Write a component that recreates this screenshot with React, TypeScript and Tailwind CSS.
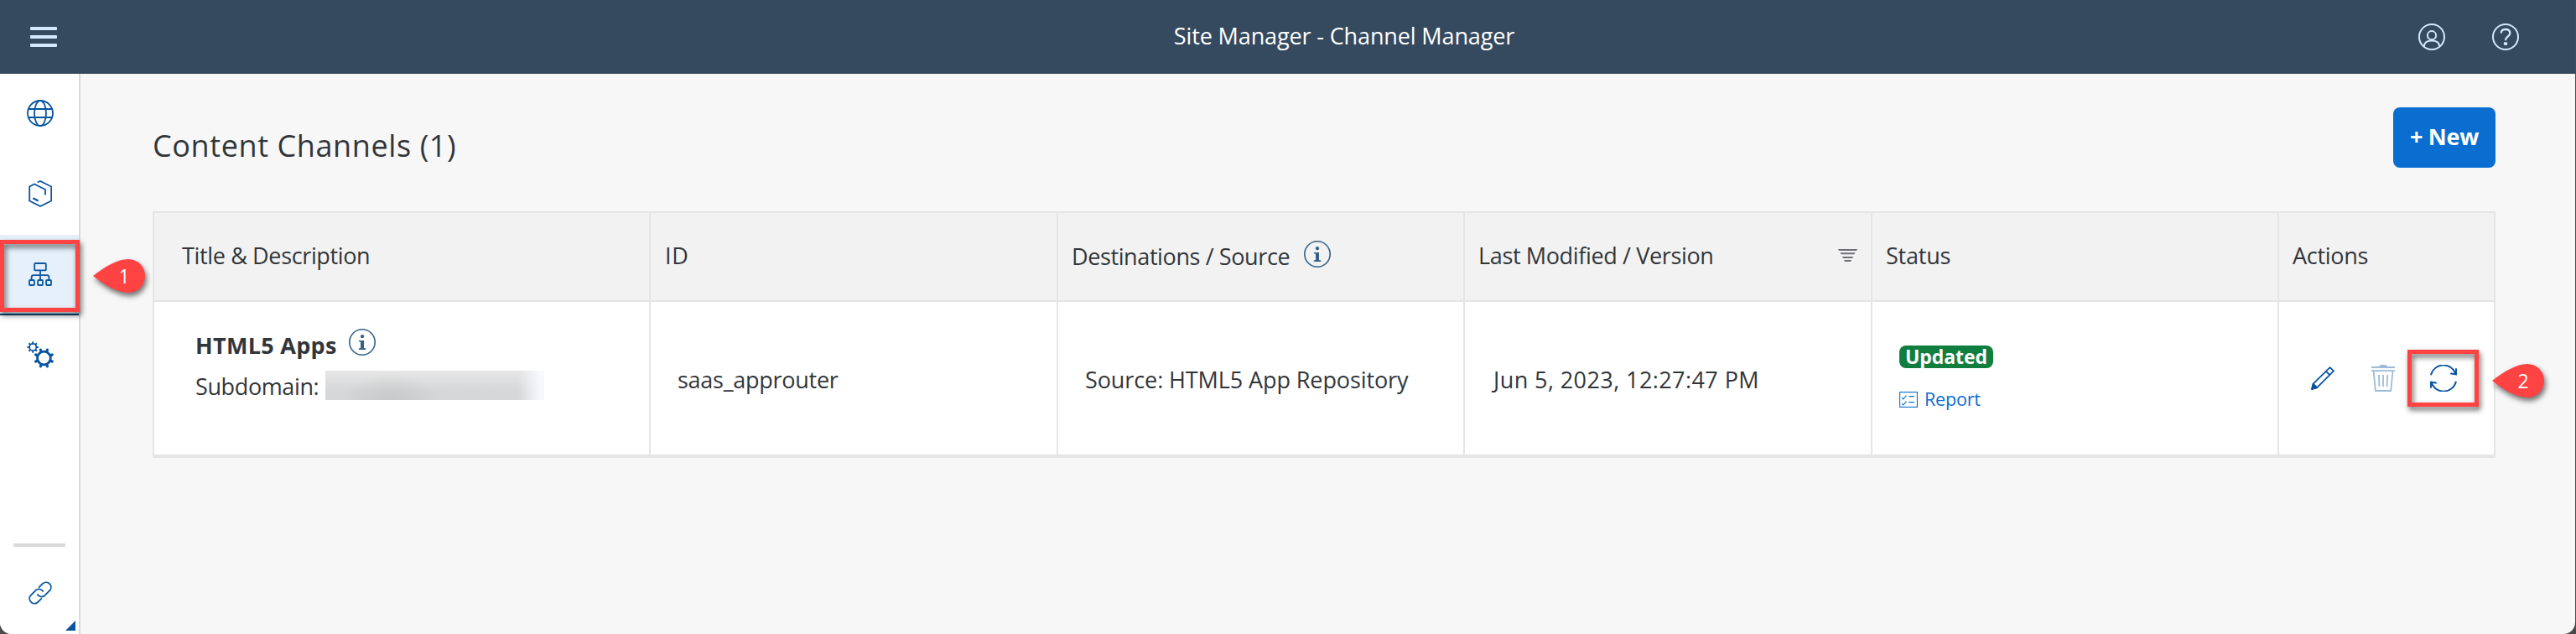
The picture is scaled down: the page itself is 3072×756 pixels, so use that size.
import type { ReactNode } from "react";

function Hamburger() {
  return (
    <div className="flex w-8 flex-col gap-1.5">
      <span className="h-1 rounded-[1px] bg-[#d1e8ff]" />
      <span className="h-1 rounded-[1px] bg-[#d1e8ff]" />
      <span className="h-1 rounded-[1px] bg-[#d1e8ff]" />
    </div>
  );
}

function UserIcon() {
  return (
    <svg width="32" height="32" viewBox="0 0 32 32" fill="none" stroke="#d1e8ff" strokeWidth="2">
      <circle cx="16" cy="16" r="15" />
      <circle cx="16" cy="14.2" r="5.1" />
      <path d="M6.8 27.5C7 22.6 10.5 20.6 16 20.6s9 2 9.2 6.9" />
    </svg>
  );
}

function HelpIcon() {
  return (
    <svg width="32" height="32" viewBox="0 0 32 32" fill="none" stroke="#d1e8ff" strokeWidth="2">
      <circle cx="16" cy="16" r="15" />
      <path d="M10.7 11.6C10.7 8.4 12.8 7 16 7s5.3 1.6 5.3 4.6c0 4.2-5.4 3.6-5.4 8.6" strokeWidth="2.3" />
      <rect x="13.8" y="22.2" width="4.4" height="3.8" rx="1.4" fill="#d1e8ff" stroke="none" />
    </svg>
  );
}

function GlobeIcon() {
  return (
    <svg width="32" height="32" viewBox="0 0 32 32" fill="none" stroke="#0854a0" strokeWidth="1.8">
      <circle cx="16" cy="16" r="15" />
      <ellipse cx="16" cy="16" rx="7" ry="15" />
      <path d="M2 11h28M2 21h28" />
    </svg>
  );
}

function ProductIcon() {
  return (
    <svg width="28" height="32" viewBox="0 0 28 32" fill="none" stroke="#0854a0" strokeWidth="1.8">
      <path d="M10.8 2.5 14 1l13.2 6.5v17L14 31 1.2 24.5v-17L7 4.5 20 11v6.5" />
      <path d="m5.3 21.2 6.4 3.3" strokeWidth="2.2" />
    </svg>
  );
}

function HierarchyIcon() {
  return (
    <svg width="28" height="28" viewBox="0 0 28 28" fill="none" stroke="#0854a0" strokeWidth="1.8">
      <rect x="7.2" y="1" width="13.6" height="8.4" rx="1" />
      <path d="M14 9.4V21M3.6 20.6V17.6Q3.6 15.1 6.1 15.1H21.9Q24.4 15.1 24.4 17.6V20.6" />
      <rect x="1" y="21" width="5.9" height="6" rx="1" />
      <rect x="11.1" y="21" width="5.9" height="6" rx="1" />
      <rect x="21.1" y="21" width="5.9" height="6" rx="1" />
    </svg>
  );
}

const TEETH = [0, 45, 90, 135, 180, 225, 270, 315];

function GearsIcon() {
  return (
    <svg width="32" height="32" viewBox="0 0 32 32" fill="none" stroke="#0854a0">
      <circle cx="7.2" cy="7" r="4.1" strokeWidth="1.7" />
      {TEETH.map((a) => (
        <path key={a} d="M7.2 2.8V.3" strokeWidth="1.9" transform={`rotate(${a} 7.2 7)`} />
      ))}
      <circle cx="20.4" cy="20" r="7.9" strokeWidth="2.8" />
      {TEETH.map((a) => (
        <path key={a} d="M20.4 11.4V9.4" strokeWidth="3.2" strokeLinecap="round" transform={`rotate(${a + 22.5} 20.4 20)`} />
      ))}
    </svg>
  );
}

function LinkIcon() {
  return (
    <svg width="28" height="28" viewBox="0 0 28 28" fill="none" stroke="#0854a0" strokeWidth="1.8">
      <path d="M12.2 7.7l5-5a5.9 5.9 0 0 1 8.3 8.3l-6.2 6.2a5.9 5.9 0 0 1-8.9-1.7" />
      <path d="M15.8 20.3l-5 5a5.9 5.9 0 0 1-8.3-8.3l6.2-6.2a5.9 5.9 0 0 1 8.9 1.7" />
    </svg>
  );
}

function InfoIcon() {
  return (
    <svg width="32" height="32" viewBox="0 0 32 32" className="shrink-0">
      <circle cx="16" cy="16" r="15.2" fill="none" stroke="#346187" strokeWidth="1.6" />
      <circle cx="16" cy="9.1" r="2.2" fill="#346187" />
      <path d="M12 13.9h6v9.2l2.3.5v1.3h-8.5v-1.3l2.2-.5v-7.4l-2-.5z" fill="#346187" />
    </svg>
  );
}

function SortIcon() {
  return (
    <svg width="23" height="15" viewBox="0 0 23 15" fill="#6f7076">
      <path d="M0 0h23l-1 2H1zM2.6 4.2h17.8l-1 2H3.6zM5 9h13l-1 2H6zM7 13h9l-1 2H8z" />
    </svg>
  );
}

function ReportIcon() {
  return (
    <svg width="22" height="19" viewBox="0 0 22 19" fill="none" stroke="#0a6ed1" strokeWidth="1.1">
      <rect x=".6" y=".6" width="20.8" height="17.8" />
      <path d="M3 7.2 4.8 9l3.6-4.4M3 14.2 4.8 16l3.6-4.4M11.3 5.6h6.6M11.3 12.6h6.6" />
    </svg>
  );
}

function EditIcon() {
  return (
    <svg width="28" height="28" viewBox="0 0 28 28" fill="none" stroke="#0854a0" strokeWidth="1.8" strokeLinejoin="round">
      <path d="M1.1 27 2.6 20.6 22.6 1.1 27 5.4 7.2 25.2ZM17.9 5.8l4.4 4.4" />
      <path d="M1.1 27 2.6 20.6 7.2 25.2Z" fill="#0854a0" />
    </svg>
  );
}

function DeleteIcon() {
  return (
    <svg width="28" height="32" viewBox="0 0 28 32" fill="none" stroke="#9cbbd9" strokeWidth="1.8">
      <path d="M8.6 2 11 .1h6L19.4 2H28v2H0V2zM0 6.2h28v1.7H0z" fill="#9cbbd9" stroke="none" />
      <path d="M2.6 7.5 4.9 31h18.3L25.5 7.5" />
      <path d="m8.9 12 .6 14M14 12v14M19.200 12l-.6 14" />
    </svg>
  );
}

function SyncIcon() {
  return (
    <svg width="32" height="32" viewBox="0 0 32 32" fill="none" stroke="#0854a0" strokeWidth="1.9">
      <path d="M1 12.3A15.3 15.3 0 0 1 30.6 11.4M31 4.2v7.2l-6.8-1.1" />
      <path d="M31 19.7A15.3 15.3 0 0 1 1.4 20.6M1 27.8v-7.2l6.8 1.1" />
    </svg>
  );
}

function Pin({ label, className }: { label: string; className: string }) {
  return (
    <div className={`absolute h-10 w-[62px] ${className}`}>
      <svg width="62" height="40" viewBox="0 0 62 40" className="absolute inset-0 overflow-visible drop-shadow-[2px_4px_3px_rgba(0,0,0,0.55)]">
        <path d="M0 20C14 9 29 0 42 0a20 20 0 0 1 0 40C29 40 14 31 0 20Z" fill="#ff4242" />
      </svg>
      <span className="absolute inset-y-0 left-[27px] flex w-5 items-center justify-center text-[23px] text-white">{label}</span>
    </div>
  );
}

function NavItem({ children, active }: { children: ReactNode; active?: boolean }) {
  return (
    <div className={`flex h-24 items-center justify-center border-b-2 pl-0.5 ${active ? "border-[#0a4478] bg-[#e5f0fa]" : "border-transparent"}`}>
      {children}
    </div>
  );
}

const headCell = "flex items-center border-b-2 border-[#e5e5e5] bg-[#f2f2f2] pb-[3px]";
const bodyCell = "flex bg-white";
const divider = "border-r-2 border-r-[#e5e5e5]";

export default function App() {
  return (
    <div className="h-[756px] w-full overflow-hidden bg-[#4c4a48] pr-px font-['Open_Sans','Noto_Sans',sans-serif] text-[27px] leading-10 text-[#32363a]">
      <div className="relative flex h-full flex-col overflow-hidden rounded-b-[14px] bg-[#f7f7f7] whitespace-nowrap">
        <header className="grid h-[88px] shrink-0 grid-cols-[1fr_auto_1fr] items-center bg-[#354a5f] pr-[67px] pl-9">
          <Hamburger />
          <h1 className="pb-[2px] pl-[166px] tracking-[-0.13px] text-white">Site Manager - Channel Manager</h1>
          <div className="flex justify-end gap-14">
            <UserIcon />
            <HelpIcon />
          </div>
        </header>

        <div className="flex min-h-0 flex-1">
          <nav className="flex w-24 shrink-0 flex-col border-r-2 border-[#d9d9d9] bg-white">
            <NavItem><GlobeIcon /></NavItem>
            <NavItem><ProductIcon /></NavItem>
            <NavItem active><HierarchyIcon /></NavItem>
            <NavItem><GearsIcon /></NavItem>
            <div className="mt-auto ml-4 h-1 w-[62px] bg-[#d9d9d9]" />
            <div className="flex h-[88px] items-end justify-center pb-[19px] pl-0.5">
              <LinkIcon />
            </div>
            <div className="flex h-4 items-start justify-end pr-1">
              <svg width="12" height="12" viewBox="0 0 12 12"><path d="M12 0v12H0z" fill="#0854a0" /></svg>
            </div>
          </nav>

          <main className="flex-1 pr-[95px] pl-[86px]">
            <div className="flex h-[164px] items-start justify-between pt-10">
              <h2 className="pt-[26px] text-[36px] leading-[40px] tracking-[0.6px]">Content Channels (1)</h2>
              <button className="flex h-[72px] w-[122px] items-center justify-center rounded-lg bg-[#0a6ed1] pb-[3px] font-bold tracking-[-0.3px] text-white">
                + New
              </button>
            </div>

            <div className="grid h-[294px] grid-cols-[592px_486px_485px_486px_485px_256px] grid-rows-[106px_182px] border-2 border-b-4 border-[#e5e5e5]">
              <div className={`${headCell} ${divider} pl-[33px] tracking-[-0.36px]`}>Title &amp; Description</div>
              <div className={`${headCell} ${divider} pl-[17px] tracking-[0.8px]`}>ID</div>
              <div className={`${headCell} ${divider} gap-[17px] pl-4 tracking-[-0.39px]`}>
                <span className="pt-[3px]">Destinations / Source</span>
                <div className="pb-[3px]"><InfoIcon /></div>
              </div>
              <div className={`${headCell} ${divider} justify-between pr-[16px] pl-4 tracking-[-0.36px]`}>
                Last Modified / Version
                <SortIcon />
              </div>
              <div className={`${headCell} ${divider} pl-4 tracking-[-0.23px]`}>Status</div>
              <div className={`${headCell} pl-4 tracking-[-0.3px]`}>Actions</div>

              <div className={`${bodyCell} ${divider} flex-col gap-[9px] pt-8 pl-[49px]`}>
                <div className="flex h-10 items-center gap-[14px]">
                  <span className="font-bold tracking-[0.3px]">HTML5 Apps</span>
                  <div className="pb-[8px]"><InfoIcon /></div>
                </div>
                <div className="flex h-10 items-center gap-[8px]">
                  <span className="tracking-[-0.38px]">Subdomain:</span>
                  <span className="mb-[3px] h-[35px] w-[261px] bg-[linear-gradient(to_right,transparent_88%,#f6f8fb_98%),radial-gradient(ellipse_60px_30px_at_30%_100%,rgba(190,190,190,0.6),transparent),linear-gradient(to_bottom,#e6e6e6,#d6d7d9_70%)]" />
                </div>
              </div>
              <div className={`${bodyCell} ${divider} items-center pt-[3px] pl-8 tracking-[-0.26px]`}>saas_approuter</div>
              <div className={`${bodyCell} ${divider} items-center pt-[3px] pl-8 tracking-[-0.1px]`}>Source: HTML5 App Repository</div>
              <div className={`${bodyCell} ${divider} items-center pt-[3px] pl-[34px] tracking-[0.42px]`}>Jun 5, 2023, 12:27:47 PM</div>
              <div className={`${bodyCell} ${divider} flex-col items-start pt-[52px] pl-8`}>
                <span className="flex h-[27px] w-28 items-center justify-center rounded-lg bg-[#107e3e] pb-px text-[23px] font-bold tracking-[-0.08px] text-white">
                  Updated
                </span>
                <span className="mt-[21px] flex h-8 items-center gap-2 text-[21.5px] leading-8 tracking-[-0.2px] text-[#0a6ed1]">
                  <ReportIcon />
                  Report
                </span>
              </div>
              <div className="flex items-center bg-white pl-[38px]">
                <EditIcon />
                <div className="pl-11"><DeleteIcon /></div>
                <div className="pl-[42px]"><SyncIcon /></div>
              </div>
            </div>
          </main>
        </div>

        <div className="absolute top-[286px] left-0 h-[86px] w-[95px] border-5 border-[#ff4242] drop-shadow-[2px_4px_3px_rgba(0,0,0,0.6)]" />
        <Pin label="1" className="top-[309px] left-[111px]" />
        <div className="absolute top-[417px] left-[2871px] h-[68px] w-[85px] border-5 border-[#ff4242] drop-shadow-[2px_4px_3px_rgba(0,0,0,0.6)]" />
        <Pin label="2" className="top-[434px] left-[2972px]" />
      </div>
    </div>
  );
}
